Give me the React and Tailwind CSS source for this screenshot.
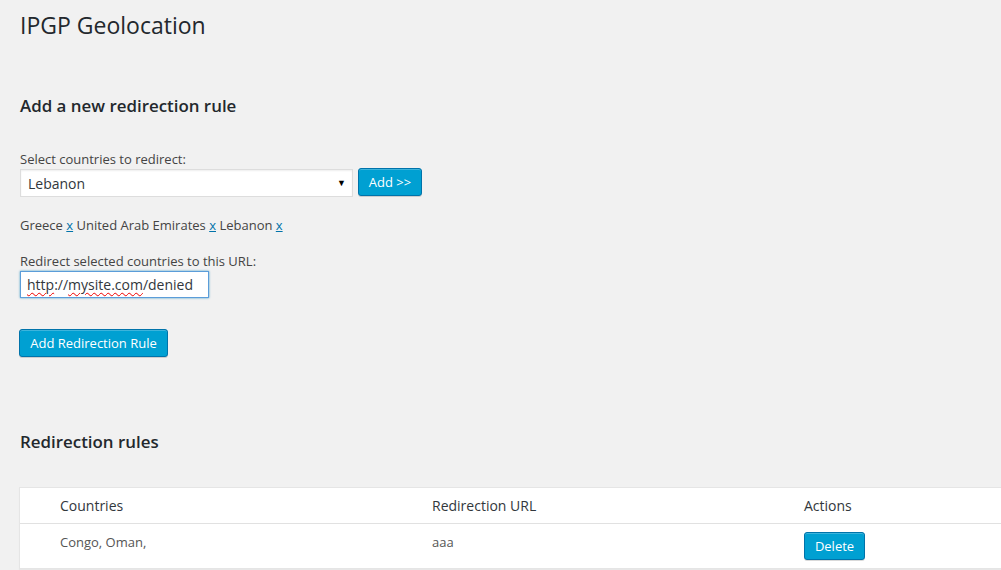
import React from 'react';

const font = { fontFamily: '"Open Sans", "Noto Sans", sans-serif' };

function WpButton({ children, className = '' }) {
  return (
    <button
      className={`h-[28px] px-[8px] whitespace-nowrap rounded-[3px] border border-[#0073aa] bg-[#00a0d2] text-white text-[13px] leading-[26px] shadow-[inset_0_1px_0_rgba(120,200,230,0.5),0_1px_0_rgba(0,0,0,0.15)] ${className}`}
    >
      {children}
    </button>
  );
}

export default function App() {
  const countries = ['Greece', 'United Arab Emirates', 'Lebanon'];

  return (
    <div className="min-h-screen w-full overflow-hidden bg-[#f1f1f1] text-[#444]" style={font}>
      <div className="pl-[20px]">
        {/* Title */}
        <h1 className="mt-[10px] text-[23px] leading-[30px] text-[#23282d] font-normal">IPGP Geolocation</h1>

        {/* Add rule form */}
        <h2 className="mt-[54px] text-[16.9px] leading-[24px] font-semibold text-[#23282d]">Add a new redirection rule</h2>

        <div className="mt-[32px] text-[13px] leading-[18px]">Select countries to redirect:</div>
        <div className="flex items-start gap-[5px]">
          <div className="mt-px w-[333px] h-[28px] bg-white border border-[#ddd] shadow-[inset_0_1px_2px_rgba(0,0,0,0.07)] flex items-center justify-between pl-[7px] pr-[6px]">
            <span className="text-[14px] text-[#32373c]">Lebanon</span>
            <span className="text-[9px] text-black">▼</span>
          </div>
          <WpButton className="w-[64px]">Add &gt;&gt;</WpButton>
        </div>

        <div className="mt-[19px] text-[13px] leading-[18px]">
          {countries.map((c) => (
            <span key={c}>
              {c} <a className="text-[#0073aa] underline">x</a>{' '}
            </span>
          ))}
        </div>

        <div className="mt-[18px] text-[13px] leading-[18px]">Redirect selected countries to this URL:</div>
        <div className="mt-px w-[189px] h-[27px] bg-white border border-[#5b9dd9] shadow-[0_0_2px_rgba(30,140,190,0.8)] flex items-center pl-[6px] text-[14px] text-[#32373c]">
          <span className="underline decoration-wavy decoration-[#e00] decoration-1 underline-offset-2">http</span>
          ://
          <span className="underline decoration-wavy decoration-[#e00] decoration-1 underline-offset-2">mysite.com</span>
          /denied
        </div>

        <WpButton className="mt-[31px] -ml-px w-[149px]">Add Redirection Rule</WpButton>

        {/* Rules list */}
        <h2 className="mt-[73px] text-[16.9px] leading-[24px] font-semibold text-[#23282d]">Redirection rules</h2>

        <div className="mt-[33px] -ml-px w-[1118px] bg-white border border-[#e5e5e5] shadow-[0_1px_1px_rgba(0,0,0,0.04)]">
          <div className="grid grid-cols-3 h-[36px] border-b border-[#e1e1e1] text-[14px] text-[#32373c] items-center">
            <div className="pl-[40px]">Countries</div>
            <div className="pl-[40px]">Redirection URL</div>
            <div className="pl-[40px]">Actions</div>
          </div>
          <div className="grid grid-cols-3 h-[44px] text-[13px] text-[#555]">
            <div className="pl-[40px] pt-[9px] leading-[18px]">Congo, Oman,</div>
            <div className="pl-[40px] pt-[9px] leading-[18px]">aaa</div>
            <div className="pl-[40px] pt-[8px]">
              <WpButton className="w-[61px]">Delete</WpButton>
            </div>
          </div>
        </div>
      </div>
    </div>
  );
}
